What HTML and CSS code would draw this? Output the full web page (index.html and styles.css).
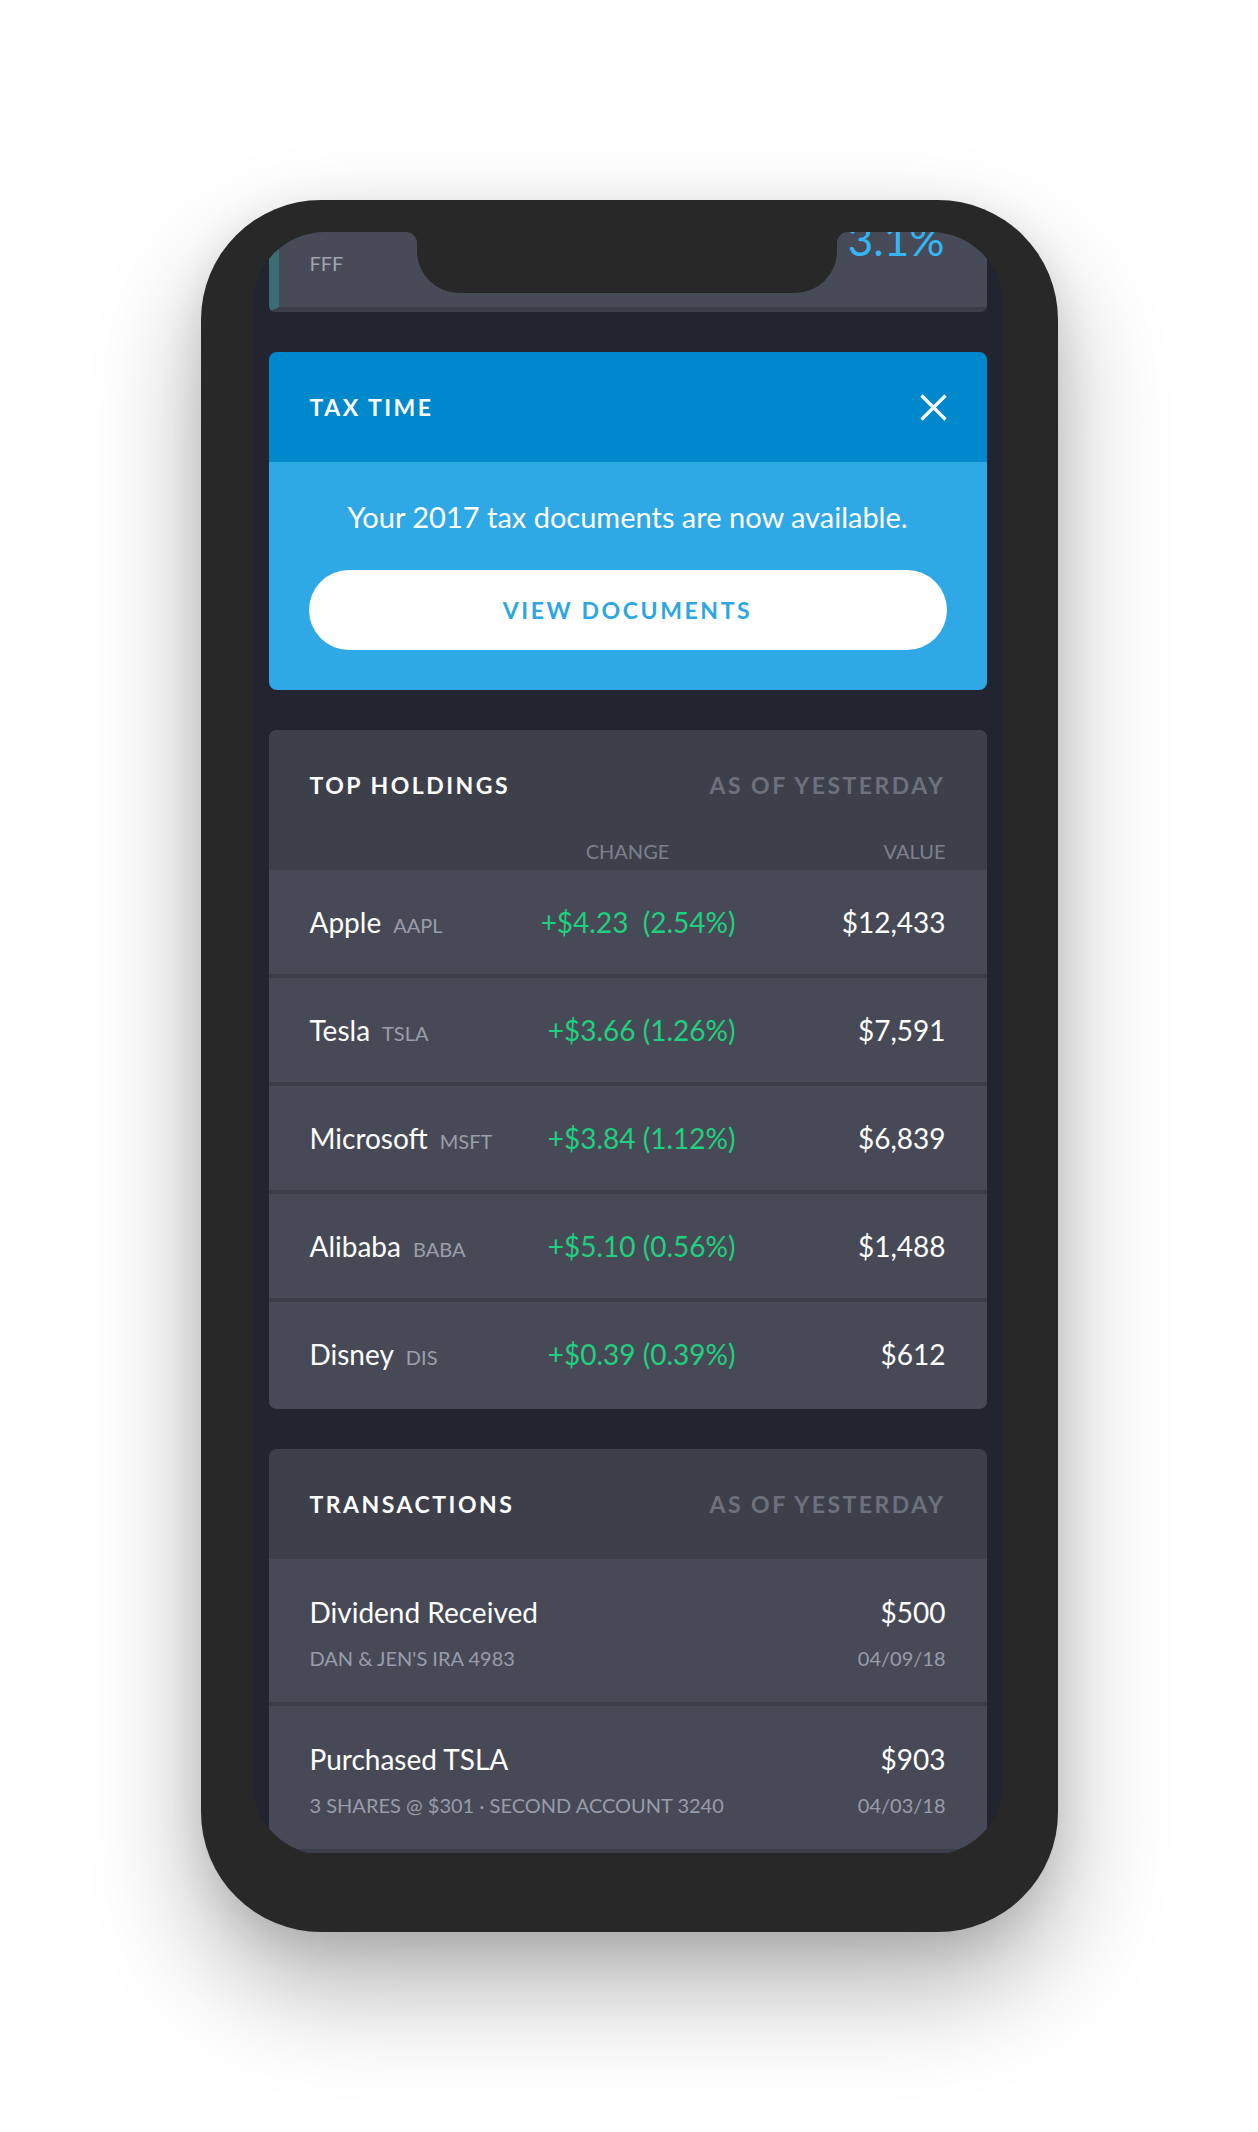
FILE: index.html
```html
<!DOCTYPE html>
<html lang="en">
<head>
<meta charset="utf-8">
<title>Portfolio</title>
<link rel="stylesheet" href="styles.css">
</head>
<body>
<div class="page">
  <div class="phone">
    <div class="screen">
      <svg class="notch" width="442" height="61" viewBox="0 0 442 61"><path d="M0,0 H442 A11,11 0 0 0 431,11 V19 A42,42 0 0 1 389,61 H53 A42,42 0 0 1 11,19 V11 A11,11 0 0 0 0,0 Z" fill="#282828"/></svg>

      <div class="card stat-card">
        <span class="stat-label">FFF</span>
        <span class="stat-value">3.1%</span>
      </div>

      <div class="card tax">
        <div class="tax-head">
          <span class="section-title">TAX TIME</span>
          <svg class="close" width="27" height="27" viewBox="0 0 27 27"><path d="M1.5 1.5 L25.5 25.5 M25.5 1.5 L1.5 25.5" stroke="#fff" stroke-width="3.2" fill="none"/></svg>
        </div>
        <div class="tax-body">
          <p class="tax-text">Your 2017 tax documents are now available.</p>
          <button class="tax-btn">VIEW DOCUMENTS</button>
        </div>
      </div>

      <div class="card holdings">
        <div class="card-head">
          <div class="head-row">
            <span class="section-title">TOP HOLDINGS</span>
            <span class="section-title as-of">AS OF YESTERDAY</span>
          </div>
          <div class="col-row">
            <span class="col-spacer"></span>
            <span class="col-change">CHANGE</span>
            <span class="col-value">VALUE</span>
          </div>
        </div>
        <div class="hold-row">
          <div class="name"><span class="name-main">Apple</span><span class="ticker">AAPL</span></div>
          <div class="change">+$4.23  (2.54%)</div>
          <div class="value">$12,433</div>
        </div>
        <div class="hold-row">
          <div class="name"><span class="name-main">Tesla</span><span class="ticker">TSLA</span></div>
          <div class="change">+$3.66 (1.26%)</div>
          <div class="value">$7,591</div>
        </div>
        <div class="hold-row">
          <div class="name"><span class="name-main">Microsoft</span><span class="ticker">MSFT</span></div>
          <div class="change">+$3.84 (1.12%)</div>
          <div class="value">$6,839</div>
        </div>
        <div class="hold-row">
          <div class="name"><span class="name-main">Alibaba</span><span class="ticker">BABA</span></div>
          <div class="change">+$5.10 (0.56%)</div>
          <div class="value">$1,488</div>
        </div>
        <div class="hold-row">
          <div class="name"><span class="name-main">Disney</span><span class="ticker">DIS</span></div>
          <div class="change">+$0.39 (0.39%)</div>
          <div class="value">$612</div>
        </div>
      </div>

      <div class="card transactions">
        <div class="card-head tx-head">
          <div class="head-row">
            <span class="section-title">TRANSACTIONS</span>
            <span class="section-title as-of">AS OF YESTERDAY</span>
          </div>
        </div>
        <div class="tx-row">
          <div class="tx-line"><span class="tx-title">Dividend Received</span><span class="tx-amount">$500</span></div>
          <div class="tx-line tx-sub"><span>DAN &amp; JEN'S IRA 4983</span><span>04/09/18</span></div>
        </div>
        <div class="tx-row">
          <div class="tx-line"><span class="tx-title">Purchased TSLA</span><span class="tx-amount">$903</span></div>
          <div class="tx-line tx-sub"><span>3 SHARES @ $301 · SECOND ACCOUNT 3240</span><span>04/03/18</span></div>
        </div>
      </div>
    </div>
  </div>
</div>
</body>
</html>
```

FILE: styles.css
```css
html, body {
  margin: 0;
  padding: 0;
  background: #ffffff;
}

body {
  font-family: "Lato", "Liberation Sans", sans-serif;
  min-height: 2132px;
}

.page {
  padding-top: 200px;
  display: flex;
  justify-content: center;
}

.phone {
  width: 857px;
  box-sizing: border-box;
  padding: 32px 55px 77px 52px;
  background: #282828;
  border-radius: 120px;
  box-shadow: 0 55px 110px rgba(0, 0, 0, 0.30), 0 10px 40px rgba(0, 0, 0, 0.10);
}

.screen {
  position: relative;
  height: 1623px;
  box-sizing: border-box;
  background: #22242f;
  border-radius: 72px;
  overflow: hidden;
  display: flex;
  flex-direction: column;
  gap: 40px;
  padding: 0 16px;
}

.notch {
  position: absolute;
  left: 153px;
  top: 0;
  z-index: 2;
  display: block;
}

.card {
  flex-shrink: 0;
  border-radius: 8px;
  overflow: hidden;
}

/* top stat card (scrolled under the status area) */
.stat-card {
  margin-top: -40px;
  height: 120px;
  box-sizing: border-box;
  background: #474b57;
  border-left: 10px solid #3b6d75;
  border-bottom: 5px solid #3b3e49;
  border-radius: 36px 36px 6px 6px;
  display: flex;
  justify-content: space-between;
  align-items: flex-start;
  padding: 25px 42px 0 31px;
}

.stat-label {
  margin-top: 34px;
  font-size: 20px;
  line-height: 24px;
  color: #a0a4b0;
}

.stat-value {
  font-size: 44px;
  line-height: 44px;
  color: #35b5f4;
}

/* tax card */
.tax-head {
  height: 110px;
  background: #0088cd;
  display: flex;
  align-items: center;
  justify-content: space-between;
  padding: 0 40px 0 41px;
}

.section-title {
  font-weight: 700;
  font-size: 23px;
  line-height: 28px;
  letter-spacing: 2.5px;
  color: #ffffff;
}

.close {
  display: block;
}

.tax-body {
  background: #2fa8e6;
  padding: 38px 40px 40px;
  display: flex;
  flex-direction: column;
  align-items: center;
  gap: 36px;
}

.tax-text {
  margin: 0;
  font-size: 29px;
  line-height: 34px;
  color: #ffffff;
}

.tax-btn {
  width: 100%;
  height: 80px;
  border: 0;
  border-radius: 40px;
  background: #ffffff;
  color: #2ea6e1;
  font-family: inherit;
  font-weight: 700;
  font-size: 23px;
  letter-spacing: 2.6px;
  padding: 0;
}

/* holdings */
.holdings {
  background: #474a56;
  padding-bottom: 3px;
}

.card-head {
  background: #3d404b;
  padding: 41px 41px 7px;
}

.head-row {
  display: flex;
  justify-content: space-between;
  align-items: center;
}

.as-of {
  color: #6d717e;
}

.col-row {
  display: flex;
  margin-top: 40px;
  font-size: 20px;
  line-height: 24px;
  color: #7c808d;
}

.col-spacer {
  flex: 1;
}

.col-change {
  width: 200px;
  box-sizing: border-box;
  padding-right: 16px;
  text-align: center;
}

.col-value {
  width: 210px;
  text-align: right;
}

.hold-row {
  height: 104px;
  background: #474a56;
  display: flex;
  align-items: center;
  padding: 0 41px;
}

.hold-row + .hold-row {
  border-top: 4px solid #3b3e49;
}

.name {
  flex: 1;
  display: flex;
  align-items: baseline;
  gap: 12px;
}

.name-main {
  font-size: 28px;
  color: #ffffff;
}

.ticker {
  font-size: 20px;
  color: #9a9eab;
}

.change {
  width: 200px;
  text-align: right;
  white-space: pre;
  font-size: 28px;
  color: #1fd07e;
}

.value {
  width: 210px;
  text-align: right;
  font-size: 28px;
  color: #ffffff;
}

/* transactions */
.tx-head {
  padding: 41px;
}

.tx-row {
  background: #474a56;
  padding: 36px 41px 31px;
}

.tx-row + .tx-row {
  border-top: 4px solid #3b3e49;
}

.tx-row:last-child {
  border-bottom: 4px solid #3b3e49;
}

.tx-line {
  display: flex;
  justify-content: space-between;
  align-items: baseline;
  font-size: 28px;
  line-height: 34px;
  color: #ffffff;
}

.tx-sub {
  margin-top: 16px;
  font-size: 20px;
  line-height: 26px;
  color: #989cab;
}
```
